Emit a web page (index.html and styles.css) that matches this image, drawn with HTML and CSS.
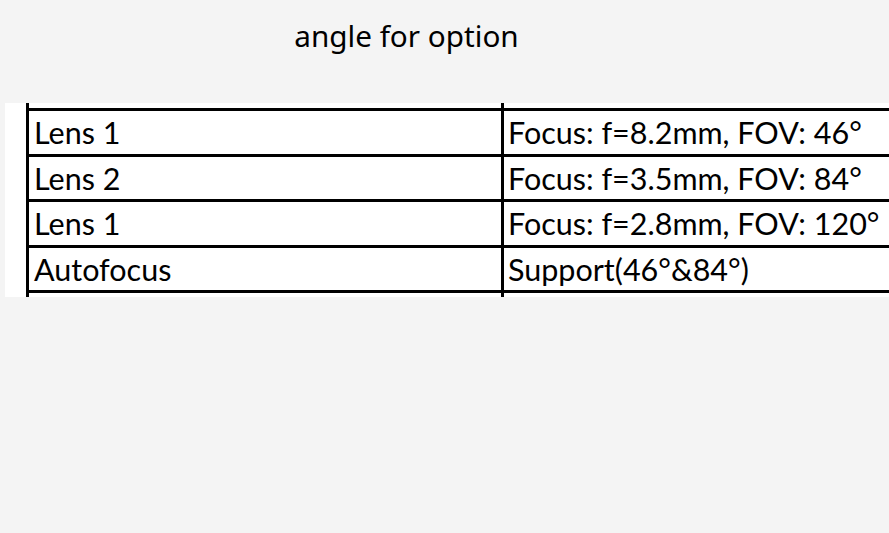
FILE: index.html
```html
<!DOCTYPE html>
<html>
<head>
<meta charset="utf-8">
<link rel="stylesheet" href="styles.css">
</head>
<body>
<h1 class="title">angle for option</h1>
<div class="sheet">
  <div class="col col-name">
    <div class="cell">Lens 1</div>
    <div class="cell">Lens 2</div>
    <div class="cell">Lens 1</div>
    <div class="cell last">Autofocus</div>
  </div>
  <div class="col col-value">
    <div class="cell">Focus: f=8.2mm, FOV: 46°</div>
    <div class="cell">Focus: f=3.5mm, FOV: 84°</div>
    <div class="cell">Focus: f=2.8mm, FOV: 120°</div>
    <div class="cell last">Support(46°&amp;84°)</div>
  </div>
</div>
</body>
</html>
```

FILE: styles.css
```css
html, body {
  margin: 0;
  padding: 0;
  background: #f4f4f4;
  overflow: hidden;
}
body {
  width: 889px;
  height: 533px;
}
.title {
  margin: 0;
  padding: 17px 0 0 0;
  width: 813px;
  text-align: center;
  font-family: "Noto Sans", sans-serif;
  font-weight: 400;
  font-size: 29.7px;
  line-height: 38px;
  color: #000;
  height: 85px;
  box-sizing: border-box;
}
.sheet {
  margin: 18px 0 0 5px;
  background: #fff;
  height: 194px;
  display: flex;
  padding-left: 21px;
  box-sizing: border-box;
  overflow: hidden;
}
.col {
  border-left: 3px solid #000;
  padding-top: 5px;
  box-sizing: border-box;
  flex: none;
}
.col-name {
  width: 475px;
}
.col-value {
  width: 420px;
}
.cell {
  border-top: 3px solid #000;
  height: 45.5px;
  box-sizing: border-box;
  font-family: Lato, "Liberation Sans", sans-serif;
  font-size: 30.5px;
  line-height: 42px;
  padding-left: 5px;
  color: #000;
  white-space: nowrap;
}
.col-value .cell {
  padding-left: 4px;
}
.cell.last {
  border-bottom: 3px solid #000;
  height: 48.5px;
}
```
